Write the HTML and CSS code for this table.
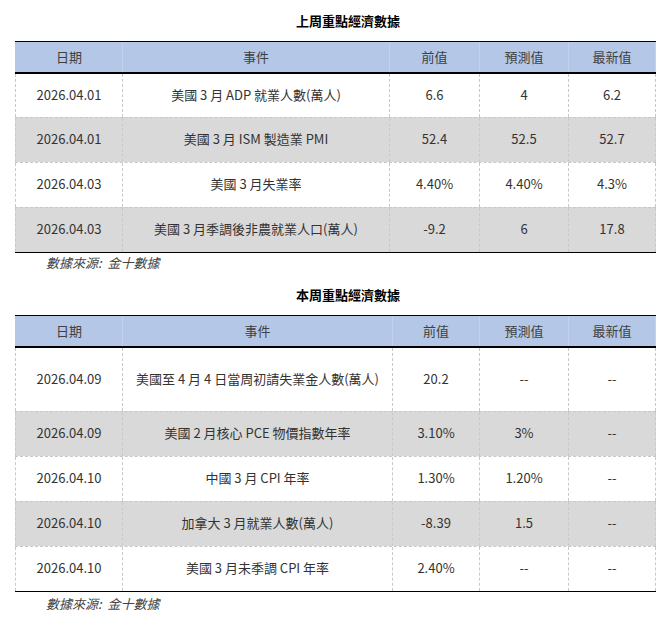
FILE: index.html
```html
<!DOCTYPE html>
<html lang="zh-Hant">
<head>
<meta charset="utf-8">
<title>重點經濟數據</title>
<link rel="stylesheet" href="styles.css">
</head>
<body>
<section class="block">
  <h2 class="title">上周重點經濟數據</h2>
  <div class="table t1">
    <div class="row head">
      <div class="cell">日期</div><div class="cell">事件</div><div class="cell">前值</div><div class="cell">預測值</div><div class="cell">最新值</div>
    </div>
    <div class="row first">
      <div class="cell">2026.04.01</div><div class="cell">美國 3 月 ADP 就業人數(萬人)</div><div class="cell">6.6</div><div class="cell">4</div><div class="cell">6.2</div>
    </div>
    <div class="row gray">
      <div class="cell">2026.04.01</div><div class="cell">美國 3 月 ISM 製造業 PMI</div><div class="cell">52.4</div><div class="cell">52.5</div><div class="cell">52.7</div>
    </div>
    <div class="row">
      <div class="cell">2026.04.03</div><div class="cell">美國 3 月失業率</div><div class="cell">4.40%</div><div class="cell">4.40%</div><div class="cell">4.3%</div>
    </div>
    <div class="row gray">
      <div class="cell">2026.04.03</div><div class="cell">美國 3 月季調後非農就業人口(萬人)</div><div class="cell">-9.2</div><div class="cell">6</div><div class="cell">17.8</div>
    </div>
  </div>
  <p class="source">數據來源:&nbsp; 金十數據</p>
</section>
<section class="block second">
  <h2 class="title">本周重點經濟數據</h2>
  <div class="table t2">
    <div class="row head">
      <div class="cell">日期</div><div class="cell">事件</div><div class="cell">前值</div><div class="cell">預測值</div><div class="cell">最新值</div>
    </div>
    <div class="row first tall">
      <div class="cell">2026.04.09</div><div class="cell">美國至 4 月 4 日當周初請失業金人數(萬人)</div><div class="cell">20.2</div><div class="cell">--</div><div class="cell">--</div>
    </div>
    <div class="row gray">
      <div class="cell">2026.04.09</div><div class="cell">美國 2 月核心 PCE 物價指數年率</div><div class="cell">3.10%</div><div class="cell">3%</div><div class="cell">--</div>
    </div>
    <div class="row">
      <div class="cell">2026.04.10</div><div class="cell">中國 3 月 CPI 年率</div><div class="cell">1.30%</div><div class="cell">1.20%</div><div class="cell">--</div>
    </div>
    <div class="row gray">
      <div class="cell">2026.04.10</div><div class="cell">加拿大 3 月就業人數(萬人)</div><div class="cell">-8.39</div><div class="cell">1.5</div><div class="cell">--</div>
    </div>
    <div class="row">
      <div class="cell">2026.04.10</div><div class="cell">美國 3 月未季調 CPI 年率</div><div class="cell">2.40%</div><div class="cell">--</div><div class="cell">--</div>
    </div>
  </div>
  <p class="source last">數據來源:&nbsp; 金十數據</p>
</section>
</body>
</html>
```

FILE: styles.css
```css
html, body {
  margin: 0;
  padding: 0;
  background: #ffffff;
}
body {
  font-family: "Noto Sans CJK TC", "Noto Sans", sans-serif;
  font-size: 13px;
  color: #333333;
  width: 671px;
}
.block {
  padding: 0 15px;
}
.title {
  margin: 0;
  padding: 12px 0 11px 25px;
  line-height: 18px;
  font-size: 13px;
  font-weight: bold;
  color: #000000;
  text-align: center;
}
.second .title {
  padding-top: 11px;
}
.table {
  width: 641px;
  border-top: 1px solid #000000;
  border-bottom: 1px solid #000000;
}
.row {
  display: grid;
  height: 45px;
  box-sizing: border-box;
  border-top: 1px dashed #c8c8c8;
}
.t1 .row {
  grid-template-columns: 107px 267px 90px 89px 88px;
}
.t2 .row {
  grid-template-columns: 107px 270px 87px 89px 88px;
}
.cell {
  display: flex;
  align-items: center;
  justify-content: center;
  padding-bottom: 3px;
  border-left: 1px dashed #c8c8c8;
  white-space: nowrap;
}
.cell:last-child {
  border-right: 1px dashed #c8c8c8;
}
.row.head {
  height: 32px;
  border-top: none;
  border-bottom: 2px solid #000000;
  background: #b4c7e7;
  color: #404040;
}
.row.head .cell {
  padding-bottom: 2px;
  border-left: 1px solid #c3d1ea;
}
.row.head .cell:first-child {
  border-left-color: #b4c7e7;
}
.row.head .cell:last-child {
  border-right: 1px solid #c3d1ea;
}
.row.first {
  border-top: none;
  height: 43px;
}
.row.first.tall {
  height: 63px;
}
.row.gray {
  background: #d9d9d9;
}
.source {
  margin: 0;
  padding-left: 31px;
  padding-bottom: 2px;
  line-height: 20px;
  font-style: italic;
  color: #444444;
}
.source.last {
  line-height: 24px;
}
```
